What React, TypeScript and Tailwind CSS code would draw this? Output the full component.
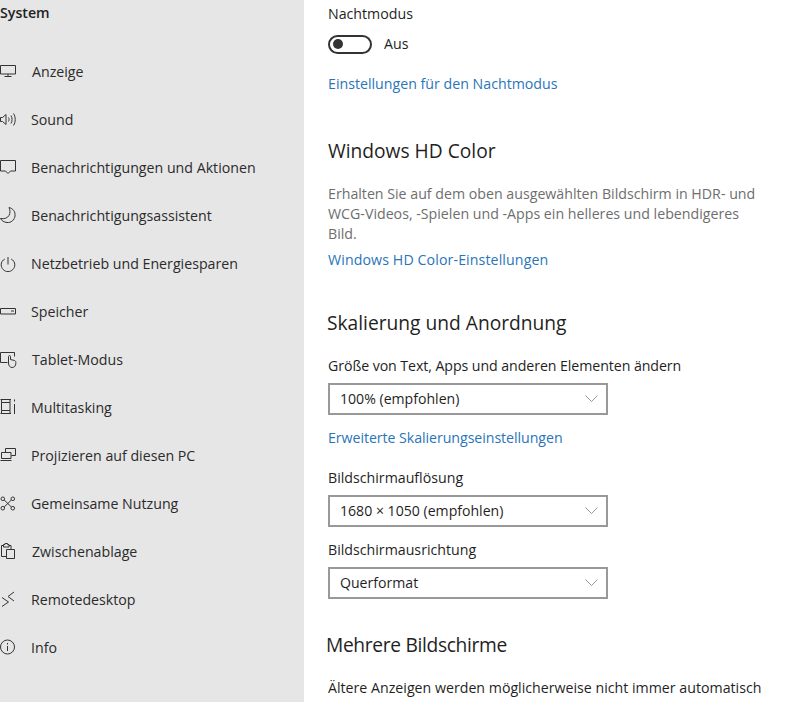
import React from 'react';

const font = { fontFamily: '"Open Sans", "Noto Sans", sans-serif' };

function Icon({ children }: { children: React.ReactNode }) {
  return (
    <svg width="18" height="18" viewBox="0 0 18 18" fill="none" stroke="#333333" strokeWidth="1" className="shrink-0">
      {children}
    </svg>
  );
}

const navItems: { label: string; icon: React.ReactNode; indent: string }[] = [
  {
    label: 'Anzeige',
    indent: 'ml-[14px]',
    icon: <path d="M0.5 2.5H15.5V11H0.5ZM8 11V13.5M4.5 13.5H11.5" />,
  },
  {
    label: 'Sound',
    indent: 'ml-[13px]',
    icon: <path d="M0.5 6.5H2.5L6 3.5V13.5L2.5 10.5H0.5ZM8.5 6.5C9.3 7.8 9.3 9.2 8.5 10.5M11 4.5C12.4 7 12.4 10 11 12.5M13.5 2.5C15.8 6 15.8 11 13.5 14.5" />,
  },
  {
    label: 'Benachrichtigungen und Aktionen',
    indent: 'ml-[13px]',
    icon: <path d="M0.5 1.5H15.5V12H10.5L8 14.5L5.5 12H0.5Z" />,
  },
  {
    label: 'Benachrichtigungsassistent',
    indent: 'ml-[13px]',
    icon: <path d="M9 0.5C13 1.5 15.5 4.5 15 9C14.5 13 11 16 7 15.5C4.2 15.2 1.8 14 0.5 11.5C4.5 12.2 7.5 11 9 8.5C10.3 6 10.3 3 9 0.5Z" />,
  },
  {
    label: 'Netzbetrieb und Energiesparen',
    indent: 'ml-[13px]',
    icon: <path d="M8 2V9.5M4.8 4C2.7 5.1 1.2 7.2 1.2 9.8C1.2 13.5 4.2 16.6 8 16.6C11.8 16.6 14.8 13.5 14.8 9.8C14.8 7.2 13.3 5.1 11.2 4" />,
  },
  {
    label: 'Speicher',
    indent: 'ml-[13px]',
    icon: <path d="M0.5 5.5H15.5V11H0.5ZM11 8H14" />,
  },
  {
    label: 'Tablet-Modus',
    indent: 'ml-[14px]',
    icon: <path d="M7.5 11.5H0.5V1.5H14.5V5.5M8.5 12V5.5C8.5 4.2 10.5 4.2 10.5 5.5V8.5L14.5 9.5C15.5 9.8 15.8 10.5 15.8 11.5V12.5C15.8 14.8 14.3 16.5 12.2 16.5C10 16.5 8.5 14.8 8.5 12Z" />,
  },
  {
    label: 'Multitasking',
    indent: 'ml-[13px]',
    icon: <path d="M0.5 0.5H11M0.5 14.5H11M1.5 3.5H10V11.5H1.5ZM1.5 0.5V3.5M10 0.5V3.5M1.5 11.5V14.5M10 11.5V14.5M14.5 0.5V2.5M14.5 5V15" />,
  },
  {
    label: 'Projizieren auf diesen PC',
    indent: 'ml-[13px]',
    icon: <path d="M5.5 5V1.5H15.5V8.5H11.5M1.5 5.5H11V11.5H1.5ZM0.5 13.5H11.5" />,
  },
  {
    label: 'Gemeinsame Nutzung',
    indent: 'ml-[13px]',
    icon: (
      <>
        <circle cx="2.8" cy="3.8" r="1.8" />
        <circle cx="12.8" cy="3.8" r="1.8" />
        <circle cx="2.8" cy="13.2" r="1.8" />
        <circle cx="12.8" cy="13.2" r="1.8" />
        <path d="M4.2 5L11.4 12M11.4 5L4.2 12" />
      </>
    ),
  },
  {
    label: 'Zwischenablage',
    indent: 'ml-[14px]',
    icon: <path d="M6 13.5H1.5V2.5H3.5M9 2.5H11V6M3.5 1.5H5V0.5H7.5V1.5H9V4H3.5ZM6.5 6.5H14.5V15.5H6.5Z" />,
  },
  {
    label: 'Remotedesktop',
    indent: 'ml-[13px]',
    icon: <path d="M2 6.5L8.5 11L2 15.5M14 1L8 5.5L14 10" />,
  },
  {
    label: 'Info',
    indent: 'ml-[13px]',
    icon: (
      <>
        <circle cx="7.5" cy="8" r="7" />
        <path d="M7.5 7V12M7.5 4V5.5" />
      </>
    ),
  },
];

function Link({ children, className = '' }: { children: React.ReactNode; className?: string }) {
  return <div className={`h-5 text-[14.2px] leading-5 text-[#2a75b9] ${className}`}>{children}</div>;
}

function Heading({ children, className = '' }: { children: React.ReactNode; className?: string }) {
  return <div className={`h-7 text-[19.2px] leading-7 text-[#1f1f1f] ${className}`}>{children}</div>;
}

function Label({ children, className = '' }: { children: React.ReactNode; className?: string }) {
  return <div className={`h-5 text-[14.2px] leading-5 text-[#1f1f1f] ${className}`}>{children}</div>;
}

function Select({ value, className = '' }: { value: string; className?: string }) {
  return (
    <div className={`flex h-8 w-[280px] items-center justify-between border-2 border-[#999999] bg-white pr-2 pl-[10px] ${className}`}>
      <span className="text-[14.1px] text-[#1f1f1f]">{value}</span>
      <svg width="13" height="8" viewBox="0 0 13 8" fill="none" stroke="#999999" strokeWidth="1">
        <path d="M0.5 0.5L6.5 6.5L12.5 0.5" />
      </svg>
    </div>
  );
}

export default function App() {
  return (
    <div className="flex h-[702px] w-[785px] overflow-hidden bg-white" style={font}>
      <aside className="h-full w-[304px] shrink-0 bg-[#e6e6e6]">
        <div className="h-[24px] pt-[3px] text-[14.2px] leading-5 font-semibold text-[#1f1f1f]">System</div>
        <ul className="pt-6">
          {navItems.map((item) => (
            <li key={item.label} className="flex h-12 items-center">
              <Icon>{item.icon}</Icon>
              <span className={`${item.indent} text-[14.2px] whitespace-nowrap text-[#2b2b2b]`}>{item.label}</span>
            </li>
          ))}
        </ul>
      </aside>

      <main className="flex-1 pl-6">
        <Label className="mt-1">Nachtmodus</Label>
        <div className="mt-2.5 flex h-5 items-center">
          <div className="flex h-[19px] w-11 items-center rounded-full border-2 border-[#333333] pl-[3px]">
            <span className="h-2.5 w-2.5 rounded-full bg-[#333333]" />
          </div>
          <span className="ml-3 text-[14.2px] text-[#1f1f1f]">Aus</span>
        </div>
        <Link className="mt-[20px]">Einstellungen für den Nachtmodus</Link>

        <Heading className="mt-[43px]">Windows HD Color</Heading>
        <p className="mt-[19px] w-[440px] text-[14.2px] leading-5 text-[#6e6e6e]">
          Erhalten Sie auf dem oben ausgewählten Bildschirm in HDR- und WCG-Videos, -Spielen und -Apps ein helleres und lebendigeres Bild.
        </p>
        <Link className="mt-[6px] tracking-[0.1px]">Windows HD Color-Einstellungen</Link>

        <Heading className="mt-[39px] -ml-px">Skalierung und Anordnung</Heading>
        <Label className="mt-[19px] tracking-[-0.08px]">Größe von Text, Apps und anderen Elementen ändern</Label>
        <Select value="100% (empfohlen)" className="mt-[7px]" />
        <Link className="mt-[13px] tracking-[-0.06px]">Erweiterte Skalierungseinstellungen</Link>
        <Label className="mt-[20px]">Bildschirmauflösung</Label>
        <Select value="1680 × 1050 (empfohlen)" className="mt-[7px]" />
        <Label className="mt-[13px]">Bildschirmausrichtung</Label>
        <Select value="Querformat" className="mt-[7px]" />

        <Heading className="mt-[32px] -ml-[2px] tracking-[-0.33px]">Mehrere Bildschirme</Heading>
        <Label className="mt-[19px] whitespace-nowrap">Ältere Anzeigen werden möglicherweise nicht immer automatisch</Label>
      </main>
    </div>
  );
}
